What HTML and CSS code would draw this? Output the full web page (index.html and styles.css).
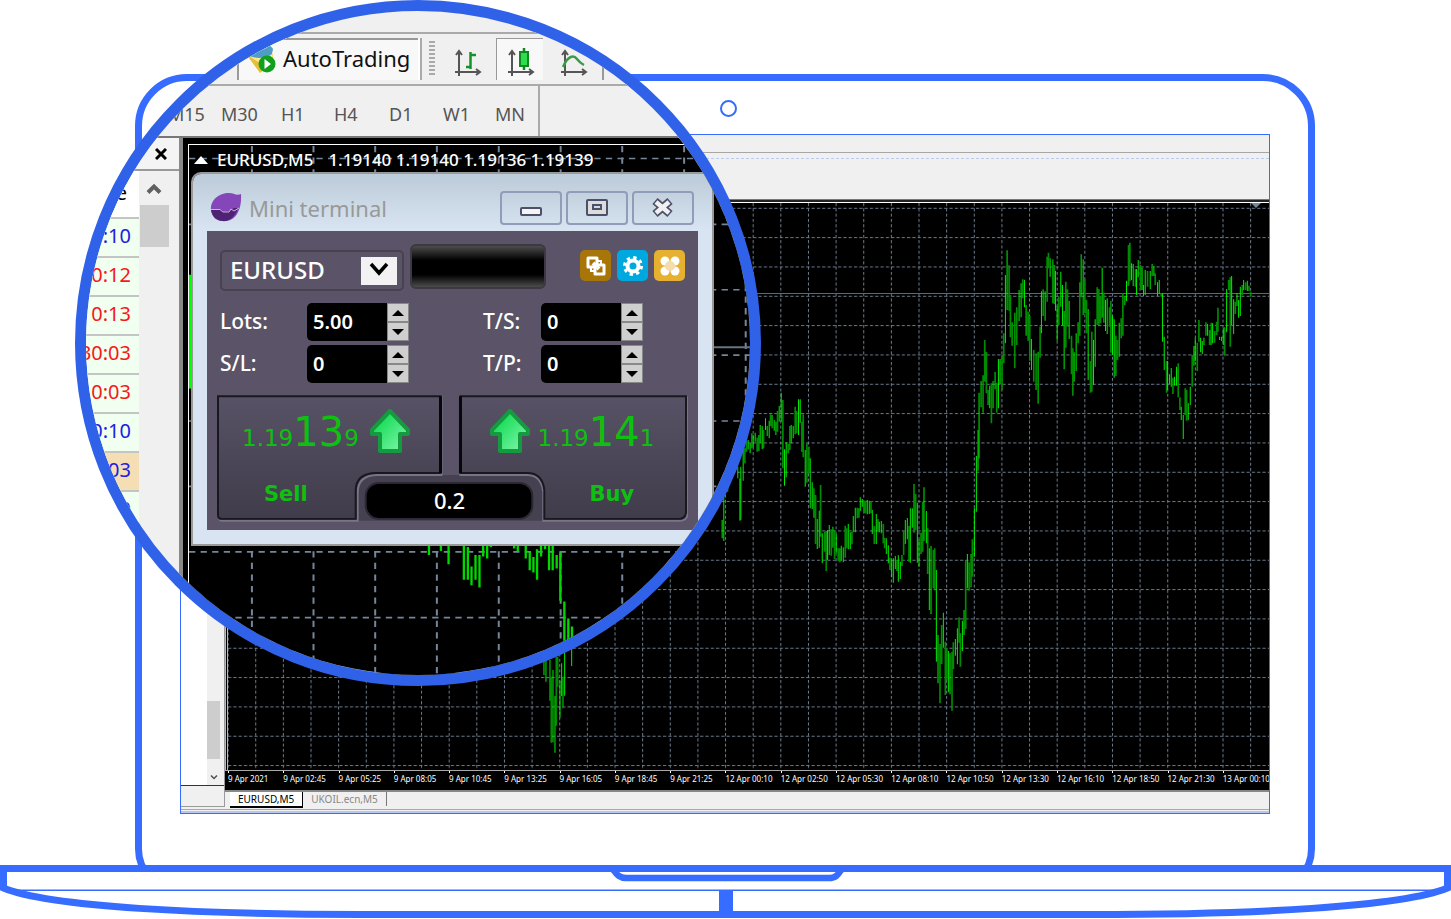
FILE: index.html
```html
<!DOCTYPE html>
<html lang="en">
<head>
<meta charset="utf-8">
<title>Mini terminal</title>
<link rel="stylesheet" href="styles.css">
</head>
<body>
<main class="stage">
  <section class="lid">
    <span class="camera"></span>
    <div class="screen">
      <div class="screen-menu"></div>
      <div class="screen-toolbar"></div>
      <div class="screen-body">
        <aside class="navigator">
          <div class="nav-view">
            <div class="nav-scroll">
              <span class="nav-thumb"></span>
              <svg class="nav-arrow" viewBox="0 0 8 6"><path d="M1 1.500L4 4.500L7 1.500" fill="none" stroke="#505050" stroke-width="1.500"/></svg>
            </div>
          </div>
          <div class="nav-foot"></div>
        </aside>
        <div class="workspace">
          <svg class="chart" viewBox="229 203 1040 567" preserveAspectRatio="none">
            <defs>
              <pattern id="cols" x="256.200" y="203" width="27.610" height="5.300" patternUnits="userSpaceOnUse"><path d="M.5 0V3.200" stroke="#6c7c8e" stroke-width="1"/></pattern>
              <pattern id="rows" x="229" y="207.800" width="5.300" height="29.330" patternUnits="userSpaceOnUse"><path d="M0 .5H3.200" stroke="#6c7c8e" stroke-width="1"/></pattern>
            </defs>
            <rect x="229" y="203" width="1040" height="567" fill="url(#cols)"/>
            <rect x="229" y="203" width="1040" height="567" fill="url(#rows)"/>
            <path d="M229 293.500H1269" stroke="#5a6a72" stroke-width="1"/>
            <path d="M1251 203h10l-5 5z" fill="#75869a"/>
            <g fill="none">
              <g transform="translate(400 450) scale(.33333)">
                <path class="bar-dim" d="M452 630V752M456 680V878M471 620V827M475 620V710M491 680V775"/>
                <path class="bar" d="M434 630V675M440 630V695M461 660V877M467 738V908M482 692V803M487 640V738M496 600V737M517 595V648"/>
              </g>
              <g transform="translate(700 370) scale(.33333)">
                <path class="bar-dim" d="M84 330V365M121 325V452M136 235V280M141 212V245M157 190V235M173 203V245M178 195V243M192 180V235M213 133V168M218 135V175M229 155V195M234 123V185M250 90V295M266 222V250M271 168V240M287 110V193M291 123V190M307 155V245M311 133V262M322 220V338M328 230V310M343 355V443M348 375V522M363 345V500M375 485V545M380 483V603M395 478V557M405 480V567M416 535V573M421 535V577M437 467V563M441 475V535M457 485V523M473 413V445M478 415V443M493 392V430M498 392V430M514 393V430M524 468V522M535 447V485"/>
                <path class="bar" d="M68 450V505M73 375V513M115 290V325M124 290V450M131 240V332M146 210V238M152 220V250M161 195V232M167 188V215M182 165V218M188 168V237M198 145V180M203 168V198M209 152V205M224 150V182M239 108V155M245 68V155M255 238V347M260 217V322M275 165V220M281 168V205M297 88V195M302 88V158M317 240V350M332 265V415M338 337V417M353 447V537M359 422V533M368 490V580M384 480V570M389 465V555M400 470V533M410 493V548M425 527V572M431 532V577M446 462V538M452 487V537M461 438V487M467 413V487M482 382V423M488 387V410M503 390V433M509 392V432M518 420V492M530 432V522M539 455V487"/>
              </g>
              <g transform="translate(880 480) scale(.33333)">
                <path class="bar-dim" d="M11 132V190M15 173V205M31 233V270M52 240V273M67 225V258M72 153V225M88 138V245M103 12V158M108 42V150M124 158V222M129 65V215M144 145V282M161 210V325M165 205V328M181 492V670M186 435V552M197 485V645M201 505V600M217 515V692M221 487V567M238 412V488M242 460V560M258 240V447M274 222V322M278 178V290"/>
                <path class="bar" d="M5 123V160M20 175V222M26 196V250M36 240V292M41 235V308M47 228V267M56 226V305M62 245V297M77 120V192M83 114V178M92 85V248M98 85V143M113 68V248M118 178V260M133 22V183M140 93V190M149 205V390M154 198V402M170 270V545M175 465V610M191 398V503M206 513V637M211 520V643M227 477V527M233 445V553M248 422V513M253 390V465M263 222V325M268 247V332M284 85V230M290 -72V95"/>
              </g>
              <g transform="translate(960 190) scale(.33333)">
                <path class="bar-dim" d="M55 720V842M70 556V668M75 450V575M80 486V610M95 580V700M111 578V668M127 495V600M132 430V520M148 226V362M152 315V442M165 368V535M171 352V465M189 268V325M205 365V452M210 378V512M222 480V575M229 490V600M241 410V503M262 200V335M266 188V235M279 208V340M284 225V342M297 320V405M318 275V473M323 298V410M335 437V553M339 475V617M355 397V460M360 277V437M375 268V370M380 330V430M392 513V608M396 425V605M412 292V405M417 297V405M422 318V400M432 308V398M449 352V410M453 332V488M468 437V558M473 450V510M484 385V445M489 310V437M506 165V288M510 158V273M527 237V290M542 225V300M547 232V300M563 243V290M577 222V258M586 250V285M604 310V320M620 513V608M639 563V612M655 520V622M660 622V660M676 595V675M680 600V692M697 495V590M712 458V543M717 390V455M738 397V437M749 420V465M754 398V465M764 423V458M770 395V435M774 353V425M794 412V497M806 270V300M811 262V470M826 335V372M847 285V315M857 277V300M867 287V303M872 305V320"/>
                <path class="bar" d="M58 608V805M64 573V652M85 600V645M90 587V655M100 573V655M106 546V598M116 507V655M121 507V582M137 255V460M142 181V360M157 397V467M178 300V393M184 280V382M194 270V352M199 345V437M215 447V540M235 485V641M245 304V430M250 298V378M256 304V392M271 205V260M287 243V362M292 348V452M303 245V350M308 285V405M313 363V538M328 333V447M343 487V575M349 430V543M364 193V322M370 208V375M385 357V570M401 450V585M406 388V530M427 233V383M437 330V423M442 325V432M458 378V495M463 388V563M478 398V500M495 318V346M500 272V333M515 220V270M520 222V288M530 237V315M535 210V262M551 285V318M556 240V315M571 243V297M582 228V258M593 277V318M598 270V312M608 310V455M613 440V540M623 513V600M629 553V582M634 534V590M644 560V587M650 530V587M664 650V690M670 675V747M685 640V690M691 590V645M702 468V527M706 445V513M722 443V487M727 453V492M732 443V465M743 402V437M758 400V460M779 440V450M785 440V453M790 415V465M800 297V427M815 258V405M821 328V432M831 310V348M836 330V383M841 290V378M851 270V300M862 272V303"/>
              </g>
            </g>
          </svg>
          <ol class="axis">
            <li>9 Apr 2021</li><li>9 Apr 02:45</li><li>9 Apr 05:25</li><li>9 Apr 08:05</li><li>9 Apr 10:45</li><li>9 Apr 13:25</li><li>9 Apr 16:05</li><li>9 Apr 18:45</li><li>9 Apr 21:25</li><li>12 Apr 00:10</li><li>12 Apr 02:50</li><li>12 Apr 05:30</li><li>12 Apr 08:10</li><li>12 Apr 10:50</li><li>12 Apr 13:30</li><li>12 Apr 16:10</li><li>12 Apr 18:50</li><li>12 Apr 21:30</li><li>13 Apr 00:10</li>
          </ol>
          <nav class="tabs">
            <button class="tab tab-active" type="button">EURUSD,M5</button>
            <button class="tab" type="button">UKOIL.ecn,M5</button>
          </nav>
        </div>
      </div>
      <div class="screen-foot"></div>
    </div>
  </section>

  <svg class="base" viewBox="0 865 1451 54" preserveAspectRatio="none">
    <path d="M3.500 868.500H1447.500V888C1401 907 1251 914.500 1090 914.500H361C200 914.500 50 907 3.500 888Z" fill="#fff" stroke="#366cff" stroke-width="7"/>
    <path d="M5 890.300H1446" stroke="#366cff" stroke-width="1.600"/>
    <path d="M606 864.500C616 867 614 878 626 878H829C841 878 839 867 848 864.500" fill="none" stroke="#366cff" stroke-width="6.500"/>
    <path d="M719 891h14v27h-14z" fill="#366cff"/>
  </svg>

  <section class="lens">
    <div class="lens-menu"></div>
    <div class="lens-toolbar">
      <button class="auto" type="button">
        <svg class="auto-icon" viewBox="0 0 32 32">
          <path d="M2 12l15 6 12-6-1 9-12 10z" fill="#e8bd37"/>
          <path d="M2 12l15 5 12-5-1 6-11 4z" fill="#ffe68a"/>
          <path d="M3 7c6-6 22-7 26 0l-1 5c-6 5-18 5-24 1z" fill="#4f9cc4"/>
          <path d="M7 5c6-4 14-4 17 0-4 4-13 4-17 0z" fill="#8bcbe6"/>
          <circle cx="23" cy="22" r="8.500" fill="#12a01c"/>
          <path d="M20.500 17l6.500 5-6.500 5z" fill="#fff"/>
        </svg>
        <span>AutoTrading</span>
      </button>
      <span class="grip"></span>
      <button class="kind" type="button" aria-label="Bar chart">
        <svg viewBox="0 0 30 30"><path d="M6 3v25M2 24h24M3 7l3-4 3 4M23 21l4 3-4 3" fill="none" stroke="#555" stroke-width="2"/><path d="M17.500 4v17M18 7h5M13 19h5" fill="none" stroke="#17922a" stroke-width="2.500"/></svg>
      </button>
      <button class="kind kind-active" type="button" aria-label="Candlesticks">
        <svg viewBox="0 0 30 30"><path d="M6 3v25M2 24h24M3 7l3-4 3 4M23 21l4 3-4 3" fill="none" stroke="#555" stroke-width="2"/><path d="M18 0v22" stroke="#0c8a1c" stroke-width="2.500"/><path d="M14 4h8v14h-8z" fill="#2fdc50" stroke="#0c8a1c" stroke-width="2"/></svg>
      </button>
      <button class="kind" type="button" aria-label="Line chart">
        <svg viewBox="0 0 30 30"><path d="M6 3v25M2 24h24M3 7l3-4 3 4M23 21l4 3-4 3" fill="none" stroke="#555" stroke-width="2"/><path d="M4 19C9 7 15 7 18 11s5 5 7 6" fill="none" stroke="#3a9c46" stroke-width="2.500"/></svg>
      </button>
      <span class="divider"></span>
    </div>
    <div class="frames">
      <button type="button">M15</button><button type="button">M30</button><button type="button">H1</button><button type="button">H4</button><button type="button">D1</button><button type="button">W1</button><button type="button">MN</button>
    </div>
    <div class="lens-body">
      <aside class="orders">
        <div class="orders-bar">
          <button type="button" class="orders-close" aria-label="Close"><svg viewBox="0 0 12 12"><path d="M1 1l10 10M11 1L1 11" stroke="#000" stroke-width="3"/></svg></button>
        </div>
        <div class="orders-main">
          <ul class="times">
            <li class="times-head">e</li>
            <li class="t-blue">:10</li>
            <li class="t-red">0:12</li>
            <li class="t-red">0:13</li>
            <li class="t-red">30:03</li>
            <li class="t-red">0:03</li>
            <li class="t-blue">0:10</li>
            <li class="t-blue t-on">03</li>
            <li class="t-blue">0</li>
          </ul>
          <div class="orders-scroll">
            <svg viewBox="0 0 16 12"><path d="M2 9.500L8 3.500L14 9.500" fill="none" stroke="#606060" stroke-width="4"/></svg>
            <span class="orders-thumb"></span>
          </div>
        </div>
      </aside>
      <div class="zoomed">
        <svg class="zoomed-grid" viewBox="188 145 580 541">
          <path d="M188 158.500H768M188 224.500H768M188 290H768M188 355.500H768M188 421.500H768M188 487H768M188 552.700H768M188 618.500H768" stroke="#75869a" stroke-width="1.700" stroke-dasharray="6.300 5.300"/>
          <path d="M251 146V686M312.700 146V686M374.500 146V686M436.300 146V686M498.300 146V686M560.300 146V686M622 146V686M684 146V686M745.700 146V686" stroke="#75869a" stroke-width="2" stroke-dasharray="6.300 5.300"/>
          <path d="M188 347.700H768" stroke="#66757f" stroke-width="2"/>
          <g transform="translate(400 450) scale(.33333)"><path class="bar-big" d="M85 280V317M121 280V305M144 280V345M190 280V392M202 293V392M213 352V408M225 317V392M237 317V415M248 285V322M260 285V328M271 285V293M341 280V298M352 280V307M376 287V328M388 305V363M399 323V370M410 300V392M422 280V322M434 280V300M446 280V363M457 280V363M469 317V358M480 310V455M492 457V575M504 508V575M515 532V575"/></g>
          <path d="M189 275V389" stroke="#0f0" stroke-width="2"/>
        </svg>
        <p class="quote"><svg class="quote-mark" viewBox="0 0 14 8"><path d="M0 8L7 0L14 8z" fill="#fff"/></svg><span>EURUSD,M5</span><span>1.19140 1.19140 1.19136 1.19139</span></p>

        <section class="window">
          <header class="title">
            <svg class="logo" viewBox="0 0 32 30"><path d="M1 17C0 7 9 0 19 0c5 0 7 3 12 1 1 14-4 28-18 27C6 28 2 24 1 17z" fill="#8446b8"/><path d="M1 17l9-1 4 3 5-1 5-3 4 0C25 25 18 29 12 28 5 27 2 22 1 17z" fill="#4f2373"/><path d="M1 16.500h9l3 2.500h6l2-3 3 2 5-3" fill="none" stroke="#cbb5e2" stroke-width="1"/></svg>
            <h1>Mini terminal</h1>
            <div class="title-buttons">
              <button type="button" aria-label="Minimize"><svg viewBox="0 0 24 20"><rect x="2" y="10" width="20" height="7" rx="1" fill="#f4f4f4" stroke="#4d5066" stroke-width="2"/></svg></button>
              <button type="button" aria-label="Maximize"><svg viewBox="0 0 24 20"><rect x="2" y="2" width="20" height="15" rx="1" fill="#dcdcdc" stroke="#4d5066" stroke-width="2"/><rect x="8" y="7" width="8" height="4" fill="#cdd9e8" stroke="#4d5066" stroke-width="2"/></svg></button>
              <button type="button" aria-label="Close"><svg viewBox="0 0 24 20"><path d="M4 3l15 13M19 3L4 16" stroke="#4d5066" stroke-width="8"/><path d="M5 4l13 11M18 4L5 15" stroke="#f0f0f0" stroke-width="4.500"/></svg></button>
            </div>
          </header>
          <form class="panel">
            <div class="tools">
              <label class="symbol">
                <select aria-label="Symbol"><option>EURUSD</option></select>
                <svg viewBox="0 0 36 28"><path d="M0 0h36v28H0z" fill="#f2f2f2"/><path d="M10 7l8 9 8-9" fill="none" stroke="#000" stroke-width="3.500"/></svg>
              </label>
              <output class="display"></output>
              <div class="quick">
                <button type="button" class="q-brown" aria-label="Link"><svg viewBox="0 0 20 20"><path d="M2 2h9v9H2zM9 9h9v9H9z" fill="none" stroke="#fff" stroke-width="3" stroke-linejoin="round"/><path d="M7 7l6 6" stroke="#fff" stroke-width="4"/><path d="M10 5h5v5M5 10v5h5" fill="none" stroke="#fff" stroke-width="2"/></svg></button>
                <button type="button" class="q-blue" aria-label="Settings"><svg viewBox="0 0 20 20"><circle cx="10" cy="10" r="5.500" fill="none" stroke="#fff" stroke-width="4"/><circle cx="10" cy="10" r="8.500" fill="none" stroke="#fff" stroke-width="3" stroke-dasharray="3.340 3.340"/></svg></button>
                <button type="button" class="q-gold" aria-label="Apps"><svg viewBox="0 0 20 20"><circle cx="5" cy="5" r="4.500" fill="#fff"/><circle cx="15" cy="5" r="4.500" fill="#fff"/><circle cx="5" cy="15" r="4.500" fill="#fff"/><circle cx="15" cy="15" r="4.500" fill="#fff"/><circle cx="10" cy="10" r="5" fill="#f4dcab"/></svg></button>
              </div>
            </div>
            <div class="fields">
              <label for="lots">Lots:</label>
              <span class="spin"><input id="lots" type="text" value="5.00"><span class="steps"><button class="up" type="button" aria-label="Lots up"></button><button class="down" type="button" aria-label="Lots down"></button></span></span>
              <label for="ts">T/S:</label>
              <span class="spin"><input id="ts" type="text" value="0"><span class="steps"><button class="up" type="button" aria-label="T/S up"></button><button class="down" type="button" aria-label="T/S down"></button></span></span>
              <label for="sl">S/L:</label>
              <span class="spin"><input id="sl" type="text" value="0"><span class="steps"><button class="up" type="button" aria-label="S/L up"></button><button class="down" type="button" aria-label="S/L down"></button></span></span>
              <label for="tp">T/P:</label>
              <span class="spin"><input id="tp" type="text" value="0"><span class="steps"><button class="up" type="button" aria-label="T/P up"></button><button class="down" type="button" aria-label="T/P down"></button></span></span>
            </div>
            <div class="deal">
              <svg class="deal-art" viewBox="216 394 474 130">
                <defs>
                  <linearGradient id="face" x1="0" y1="0" x2="0" y2="1"><stop offset="0" stop-color="#585266"/><stop offset="1" stop-color="#403c4a"/></linearGradient>
                  <linearGradient id="go" x1="0" y1="0" x2="1" y2="1"><stop offset=".3" stop-color="#22e060"/><stop offset=".8" stop-color="#6cf09c"/></linearGradient>
                </defs>
                <path d="M350 521C358 478 362 475 380 475H525C542 476 544 485 552 521z" fill="#464150"/>
                <g fill="url(#face)" stroke-width="2">
                  <path d="M219 397H442V475H378Q358 475 358 493V521H223Q219 521 219 517z" stroke="#7a7489"/>
                  <path d="M218 396H441V473H377Q356 473 356 491V519H222Q218 519 218 515z" stroke="#1a181f"/>
                  <path d="M461 397H688V517Q686 521 680 521H544V492Q542 475 528 475H461z" stroke="#7a7489"/>
                  <path d="M461 396H687V513Q686 519 680 519H545V490Q543 473 528 473H461z" stroke="#1a181f"/>
                </g>
                <path d="M441 396V473M461 396V473" stroke="#08080a" stroke-width="3"/>
                <rect x="366" y="483" width="167" height="36" rx="13" stroke="#2c2934" stroke-width="2"/>
              </svg>
              <button class="side sell" type="button">
                <span class="price"><span>1.19</span><b>13</b><span>9</span><svg viewBox="0 0 42 46"><path d="M21 3L39 22V26H31V43H11V26H3V22z" fill="url(#go)" stroke="#159a40" stroke-width="4" stroke-linejoin="round"/></svg></span>
                <strong>Sell</strong>
              </button>
              <button class="side buy" type="button">
                <span class="price"><svg viewBox="0 0 42 46"><path d="M21 3L39 22V26H31V43H11V26H3V22z" fill="url(#go)" stroke="#159a40" stroke-width="4" stroke-linejoin="round"/></svg><span>1.19</span><b>14</b><span>1</span></span>
                <strong>Buy</strong>
              </button>
              <output class="spread">0.2</output>
            </div>
          </form>
        </section>
      </div>
    </div>
  </section>
</main>
</body>
</html>
```

FILE: styles.css
```css
* { box-sizing: border-box; }
body { margin: 0; background: #fff; font-family: "Noto Sans", "Open Sans", sans-serif; }
button { margin: 0; padding: 0; border: 0; background: none; font: inherit; color: inherit; }
svg { display: block; }
ul, ol, p, h1 { margin: 0; padding: 0; list-style: none; }

.stage { position: relative; padding-top: 74px; overflow: hidden; }

/* Laptop */
.lid {
  display: flex; flex-direction: column; align-items: center;
  margin: 0 136px 0 135px; padding: 19px 38px 72px;
  border: 7px solid #366cff; border-radius: 52px 52px 44px 44px;
}
.camera { width: 17px; height: 17px; margin: 0 0 17px 6px; border: 2px solid #366cff; border-radius: 50%; }
.screen { width: 100%; border: 1px solid #366cff; background: #f0f0f0; overflow: hidden; }
.screen-menu { height: 18px; border-bottom: 1px solid #a6a6a6; }
.screen-toolbar { height: 47px; padding-top: 5px; border-bottom: 1px solid #777; }
.screen-toolbar::before { content: ""; display: block; border-top: 1px dashed #bccbf0; }
.screen-body { display: grid; grid-template-columns: 44px 1fr; }
.navigator { display: flex; flex-direction: column; border-right: 1px solid #999; margin-bottom: 2px; }
.nav-view { flex: 1; display: flex; justify-content: flex-end; padding-right: 4px; background: linear-gradient(90deg, #fff 39px, #f0f0f0 39px); border-bottom: 1px solid #333; }
.nav-scroll { display: flex; flex-direction: column; justify-content: flex-end; align-items: center; width: 13px; background: #f0f0f0; }
.nav-thumb { width: 13px; height: 58px; background: #cdcdcd; }
.nav-arrow { width: 8px; height: 6px; margin: 15px 0 5px; }
.nav-foot { height: 21px; border-bottom: 1px solid #999; }
.workspace { min-width: 0; display: flex; flex-direction: column; border-top: 2px solid #222; }
.chart { width: 100%; height: 568px; background: #000; border-top: 1px solid #fff; border-left: 3px double #bbb; }
.bar { stroke: #00f000; stroke-width: 3; }
.bar-dim { stroke: #008c00; stroke-width: 5; }
.bar-big { stroke: #00d800; stroke-width: 7; }
.axis {
  display: grid; grid-template-columns: repeat(19, 5.31%); height: 20px; padding-left: 3px;
  overflow: hidden; background: #000; border-top: 1px solid #aaa;
  color: #fff; font-size: 8px; line-height: 11px; white-space: nowrap;
}
.axis li::before { content: ""; display: block; width: 1px; height: 2px; background: #fff; }
.tabs { display: flex; height: 19px; padding-left: 5px; border-top: 2px solid #888; font-size: 10px; line-height: 14px; color: #888; }
.tab { padding: 0 8px; height: 14px; border-right: 1px solid #777; }
.tab-active { height: 16px; background: #fff; color: #000; border-right: 1px solid #000; border-bottom: 2px solid #000; }
.screen-foot { height: 4px; border-top: 1px solid #aaa; border-bottom: 2px solid #b7c7f5; }
.base { position: relative; width: 100%; height: 54px; margin-top: -28px; }

/* Magnifier */
.lens {
  position: absolute; left: 75px; top: 0; width: 686px; height: 686px;
  border: 11px solid #3062e9; border-radius: 50%; overflow: hidden; background: #f0f0f0;
}
.lens-menu { height: 23px; border-bottom: 2px solid #aaa; }
.lens-toolbar { display: flex; height: 52px; padding: 4px 0 4px 151px; border-bottom: 2px solid #aaa; }
.auto {
  display: flex; align-items: center; gap: 6px; width: 181px; padding: 0 0 4px 4px; margin-right: 11px;
  background: #f8f8f8; border: solid #999; border-width: 2px 0 0 2px; box-shadow: 2px 0 #fff, 4px 0 #aaa;
  font-size: 22px; color: #111;
}
.auto-icon { width: 34px; height: 32px; }
.grip { width: 6px; margin: 3px 14px 3px 0; background: repeating-linear-gradient(#aaa 0 2px, #f0f0f0 2px 4px); }
.kind { width: 47px; padding: 7px 0 0 4px; }
.kind svg { width: 30px; height: 30px; }
.kind-active { margin-right: 12px; padding: 6px 0 0 9px; background: #f8f8f8; border-left: 1px solid #999; border-top: 1px solid #999; }
.divider { width: 2px; background: #999; }
.frames { display: grid; grid-template-columns: 53px 60px 53px 55px 54px 52px 42px; width: 454px; height: 50px; padding: 5px 0 0 82px; border-right: 2px solid #aaa; color: #555; font-size: 18px; }
.frames button { text-align: left; }
.lens-body { display: flex; height: 550px; border-top: 2px solid #777; }
.orders { display: flex; flex-direction: column; width: 97px; border-right: 4px solid #888; }
.orders-bar { display: flex; justify-content: flex-end; align-items: center; height: 33px; padding: 0 12px 0 0; border-bottom: 2px solid #999; background: #f4f4f4; }
.orders-close svg { width: 12px; height: 12px; }
.orders-main { flex: 1; display: flex; }
.times { width: 53px; background: #f0fff0; font-size: 20px; }
.times li { display: flex; justify-content: flex-end; align-items: center; height: 39px; padding: 0 8px 4px 0; border-bottom: 2px solid #c4c4c4; }
.times .times-head { height: 48px; padding-right: 12px; background: #fff; }
.t-red { color: #f81818; }
.t-blue { color: #2020e0; }
.times .t-on { background: #f5deb3; }
.orders-scroll { display: flex; flex-direction: column; align-items: center; width: 30px; padding-top: 12px; }
.orders-scroll svg { width: 16px; height: 12px; }
.orders-thumb { width: 29px; height: 42px; margin-top: 10px; background: #cdcdcd; }
.zoomed { position: relative; flex: 1; min-width: 0; padding: 6px 0 0 5px; background: #000; }
.zoomed-grid { width: 580px; height: 541px; border-top: 1px solid #fff; border-left: 1px solid #fff; }
.quote { position: absolute; left: 11px; top: 10px; display: flex; align-items: center; gap: 15px; color: #fff; font-size: 17px; font-weight: 500; line-height: 24px; white-space: pre; }
.quote-mark { width: 14px; height: 8px; margin-right: -6px; }

/* Trading window */
.window {
  position: absolute; left: 10px; top: 36px; width: 519px; padding: 0 14px;
  background: linear-gradient(#bccbd9, #d8e4f1 56px); border-bottom: 14px solid #d8e4f1; border-radius: 8px 8px 0 0; box-shadow: 0 0 0 2px #999;
}
.title { display: flex; align-items: center; height: 57px; padding: 10px 4px 0 3px; }
.logo { width: 32px; height: 30px; margin-right: 7px; }
.title h1 { flex: 1; font-size: 22px; font-weight: 400; line-height: 30px; color: #999; }
.title-buttons { display: flex; gap: 4px; }
.title-buttons button { display: flex; align-items: center; justify-content: center; width: 62px; height: 34px; border: 2px solid #8f9db8; border-radius: 4px; background: linear-gradient(#c3d0de, #d3e0ee); }
.title-buttons svg { width: 24px; height: 20px; }
.panel { padding: 13px 9px 6px; background: #5b5468; color: #fff; }
.tools { display: flex; align-items: flex-start; padding-left: 4px; }
.symbol { display: flex; align-items: center; width: 184px; height: 41px; margin: 6px 6px 0 0; padding-right: 5px; border: 2px solid #47434e; border-radius: 5px; }
.symbol select { flex: 1; min-width: 0; height: 36px; padding: 0 0 4px 8px; border: 0; background: none; color: #fff; font: 500 24px "Noto Sans", sans-serif; appearance: none; }
.symbol svg { width: 36px; height: 28px; flex: none; }
.display { width: 136px; height: 45px; border: 2px solid #3c3943; border-radius: 6px; background: linear-gradient(#4c4c4c, #000 35%, #000 70%, #4c4c4c); }
.quick { display: flex; gap: 6px; margin: 6px 0 0 34px; }
.quick button { display: flex; align-items: center; justify-content: center; width: 31px; height: 31px; border-radius: 5px; }
.quick svg { width: 20px; height: 20px; }
.q-brown { background: #a87508; }
.q-blue { background: #00a8e0; }
.q-gold { background: #e6b030; }
.fields { display: grid; grid-template-columns: 87px 176px 58px 102px; row-gap: 4px; padding: 12px 0 11px 4px; font-size: 21px; font-weight: 500; }
.fields label { line-height: 36px; }
.spin { display: flex; width: 102px; height: 38px; }
.spin input { width: 80px; padding: 0 0 2px 6px; border: 0; border-radius: 5px 0 0 5px; background: #000; color: #fff; font: 600 20px "Noto Sans", sans-serif; }
.steps { display: grid; gap: 2px; width: 22px; background: #888; padding: 1px; }
.steps button { display: grid; place-items: center; background: #cfcfcf; }
.steps button::before { content: ""; border: solid transparent; border-width: 0 6px; }
.steps .up::before { border-bottom: 6px solid #000; }
.steps .down::before { border-top: 6px solid #000; }
.deal { position: relative; display: grid; grid-template-columns: 1fr 1fr; height: 130px; font-family: "DejaVu Sans", sans-serif; color: #0ec010; }
.deal-art { position: absolute; left: 0; top: 0; width: 100%; height: 100%; }
.side { position: relative; display: flex; flex-direction: column; align-items: flex-start; padding: 14px 0 0 26px; }
.buy { padding-left: 30px; }
.price { display: flex; align-items: baseline; height: 48px; font-size: 23px; line-height: 48px; }
.price b { font-size: 40px; font-weight: 400; }
.price svg { width: 42px; height: 46px; align-self: flex-start; }
.sell .price svg { margin-left: 10px; }
.buy .price svg { margin: 0 7px 0 6px; }
.side strong { margin-top: 25px; padding-left: 22px; font-size: 21px; line-height: 26px; }
.buy strong { padding-left: 107px; }
.spread { position: absolute; left: 150px; top: 89px; width: 167px; text-align: center; font: 500 22px/34px "Noto Sans", sans-serif; color: #fff; }
```
